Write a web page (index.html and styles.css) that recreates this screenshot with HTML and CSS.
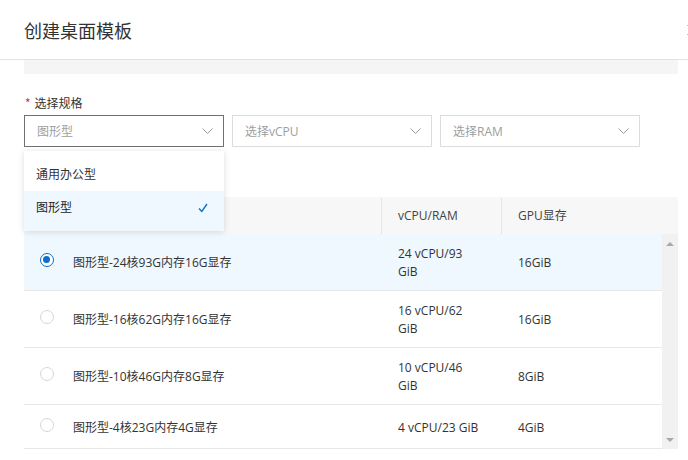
FILE: index.html
```html
<!DOCTYPE html>
<html lang="zh-CN">
<head>
<meta charset="utf-8">
<title>创建桌面模板</title>
<link rel="stylesheet" href="styles.css">
</head>
<body>
<div class="dialog">
  <header class="dlg-head">
    <h1 class="dlg-title">创建桌面模板</h1>
    <span class="dlg-close"><svg width="12" height="12" viewBox="0 0 12 12"><path d="M1 1L11 11M11 1L1 11" stroke="#bbb" stroke-width="1" fill="none"/></svg></span>
  </header>
  <div class="dlg-body">
    <div class="notice"></div>
    <div class="field">
      <div class="label"><span class="req">*</span>选择规格</div>
      <div class="selects">
        <div class="select-wrap">
          <div class="select active"><span class="ph">图形型</span><svg class="chev" width="11" height="6" viewBox="0 0 11 6"><path d="M0.5 0.5L5.5 5.5L10.5 0.5" stroke="#999" fill="none"/></svg></div>
          <ul class="menu">
            <li class="menu-item">通用办公型</li>
            <li class="menu-item selected"><span>图形型</span><svg width="10" height="10" viewBox="0 0 10 10"><path d="M1 5.5L3.8 8.5L9 1" stroke="#0a70c9" stroke-width="1.4" fill="none"/></svg></li>
          </ul>
        </div>
        <div class="select-wrap">
          <div class="select"><span class="ph">选择vCPU</span><svg class="chev" width="11" height="6" viewBox="0 0 11 6"><path d="M0.5 0.5L5.5 5.5L10.5 0.5" stroke="#999" fill="none"/></svg></div>
        </div>
        <div class="select-wrap">
          <div class="select"><span class="ph">选择RAM</span><svg class="chev" width="11" height="6" viewBox="0 0 11 6"><path d="M0.5 0.5L5.5 5.5L10.5 0.5" stroke="#999" fill="none"/></svg></div>
        </div>
      </div>
    </div>
    <div class="table">
      <div class="thead">
        <div class="th first">规格名称</div>
        <div class="th sep">vCPU/RAM</div>
        <div class="th sep">GPU显存</div>
      </div>
      <div class="tbody-wrap">
        <div class="rows">
          <div class="tr current">
            <div class="td name"><span class="radio checked"></span><span>图形型-24核93G内存16G显存</span></div>
            <div class="td">24 vCPU/93 GiB</div>
            <div class="td">16GiB</div>
          </div>
          <div class="tr">
            <div class="td name"><span class="radio"></span><span>图形型-16核62G内存16G显存</span></div>
            <div class="td">16 vCPU/62 GiB</div>
            <div class="td">16GiB</div>
          </div>
          <div class="tr">
            <div class="td name"><span class="radio"></span><span>图形型-10核46G内存8G显存</span></div>
            <div class="td">10 vCPU/46 GiB</div>
            <div class="td">8GiB</div>
          </div>
          <div class="tr">
            <div class="td name"><span class="radio"></span><span>图形型-4核23G内存4G显存</span></div>
            <div class="td">4 vCPU/23 GiB</div>
            <div class="td">4GiB</div>
          </div>
        </div>
        <div class="scrollbar">
          <span class="arrow up"></span>
          <span class="arrow down"></span>
        </div>
      </div>
    </div>
  </div>
</div>
</body>
</html>
```

FILE: styles.css
```css
html, body {
  margin: 0;
  padding: 0;
  background: #fff;
  overflow: hidden;
}
body {
  width: 688px;
  height: 460px;
  font-family: "Open Sans", "Noto Sans CJK SC", sans-serif;
  font-size: 12px;
  color: #333;
}
.dialog {
  width: 688px;
}
.dlg-head {
  height: 60px;
  border-bottom: 1px solid #e2e2e2;
  display: flex;
  align-items: center;
  padding-left: 24px;
  box-sizing: border-box;
}
.dlg-title {
  margin: 0;
  font-family: "Noto Sans CJK SC", sans-serif;
  font-size: 18px;
  font-weight: normal;
  color: #333;
  line-height: 24px;
}
.dlg-close {
  margin-left: auto;
  margin-right: -10px;
  display: flex;
}
.dlg-body {
  padding: 0 10px 0 24px;
}
.notice {
  height: 14px;
  background: #f5f5f5;
}
.field {
  margin-top: 20px;
}
.label {
  line-height: 18px;
  font-family: "Noto Sans CJK SC", sans-serif;
  color: #333;
}
.req {
  color: #d93026;
  margin: 0 4px 0 1px;
}
.selects {
  display: flex;
  gap: 8px;
  margin-top: 3px;
}
.select-wrap {
  position: relative;
  width: 200px;
}
.select {
  height: 32px;
  box-sizing: border-box;
  border: 1px solid #dcdcdc;
  display: flex;
  align-items: center;
  padding: 0 10px 0 12px;
  color: #999;
}
.select.active {
  border-color: #707070;
}
.select .ph {
  flex: 1;
  color: #9e9e9e;
}
.chev {
  display: block;
}
.menu {
  position: absolute;
  left: 0;
  top: 36px;
  width: 200px;
  margin: 0;
  padding: 7px 0 0;
  list-style: none;
  background: #fff;
  box-shadow: 0 1px 6px rgba(0, 0, 0, 0.14);
  z-index: 5;
}
.menu-item {
  height: 33px;
  line-height: 18px;
  padding: 7px 12px 0;
  box-sizing: border-box;
  font-family: "Noto Sans CJK SC", sans-serif;
  color: #333;
  display: flex;
  align-items: flex-start;
}
.menu-item.selected {
  height: 40px;
  padding-top: 7px;
  background: #eff8fe;
  justify-content: space-between;
  color: #222;
}
.menu-item.selected svg {
  margin-top: 5px;
  margin-right: 4px;
}
.table {
  margin-top: 50px;
  width: 654px;
}
.thead {
  display: grid;
  grid-template-columns: 357px 120px 1fr;
  height: 37px;
  background: #f7f7f7;
  align-items: center;
}
.th {
  position: relative;
  padding-left: 17px;
  color: #444;
  line-height: 18px;
}
.th.first {
  padding-left: 49px;
}
.th.sep::before {
  content: "";
  position: absolute;
  left: 0;
  top: -9px;
  bottom: -9px;
  border-left: 1px solid #e6e6e6;
}
.tbody-wrap {
  display: flex;
}
.rows {
  width: 638px;
}
.tr {
  display: grid;
  grid-template-columns: 357px 120px 1fr;
  border-bottom: 1px solid #e8e8e8;
  min-height: 44px;
  align-items: center;
  padding-top: 2px;
  box-sizing: border-box;
}
.tr.current {
  background: #eff8fe;
}
.td {
  padding: 9px 16px 9px 17px;
  line-height: 18px;
}
.td.name {
  display: flex;
  align-items: center;
  padding-left: 16px;
}
.radio {
  width: 14px;
  height: 14px;
  box-sizing: border-box;
  border: 1px solid #d6d6d6;
  border-radius: 50%;
  background: #fff;
  margin-right: 19px;
  margin-bottom: 6px;
  flex: none;
  position: relative;
}
.radio.checked {
  border: 1.5px solid #0a70c9;
}
.radio.checked::after {
  content: "";
  position: absolute;
  left: 2px;
  top: 2px;
  width: 7px;
  height: 7px;
  border-radius: 50%;
  background: #0a70c9;
}
.scrollbar {
  width: 16px;
  background: #f1f1f1;
  display: flex;
  flex-direction: column;
  justify-content: space-between;
  align-items: center;
  padding: 8px 0 7px;
  box-sizing: border-box;
}
.arrow {
  width: 0;
  height: 0;
  border-left: 4px solid transparent;
  border-right: 4px solid transparent;
}
.arrow.up {
  border-bottom: 4px solid #a8a8a8;
}
.arrow.down {
  border-top: 4px solid #a8a8a8;
}
```
